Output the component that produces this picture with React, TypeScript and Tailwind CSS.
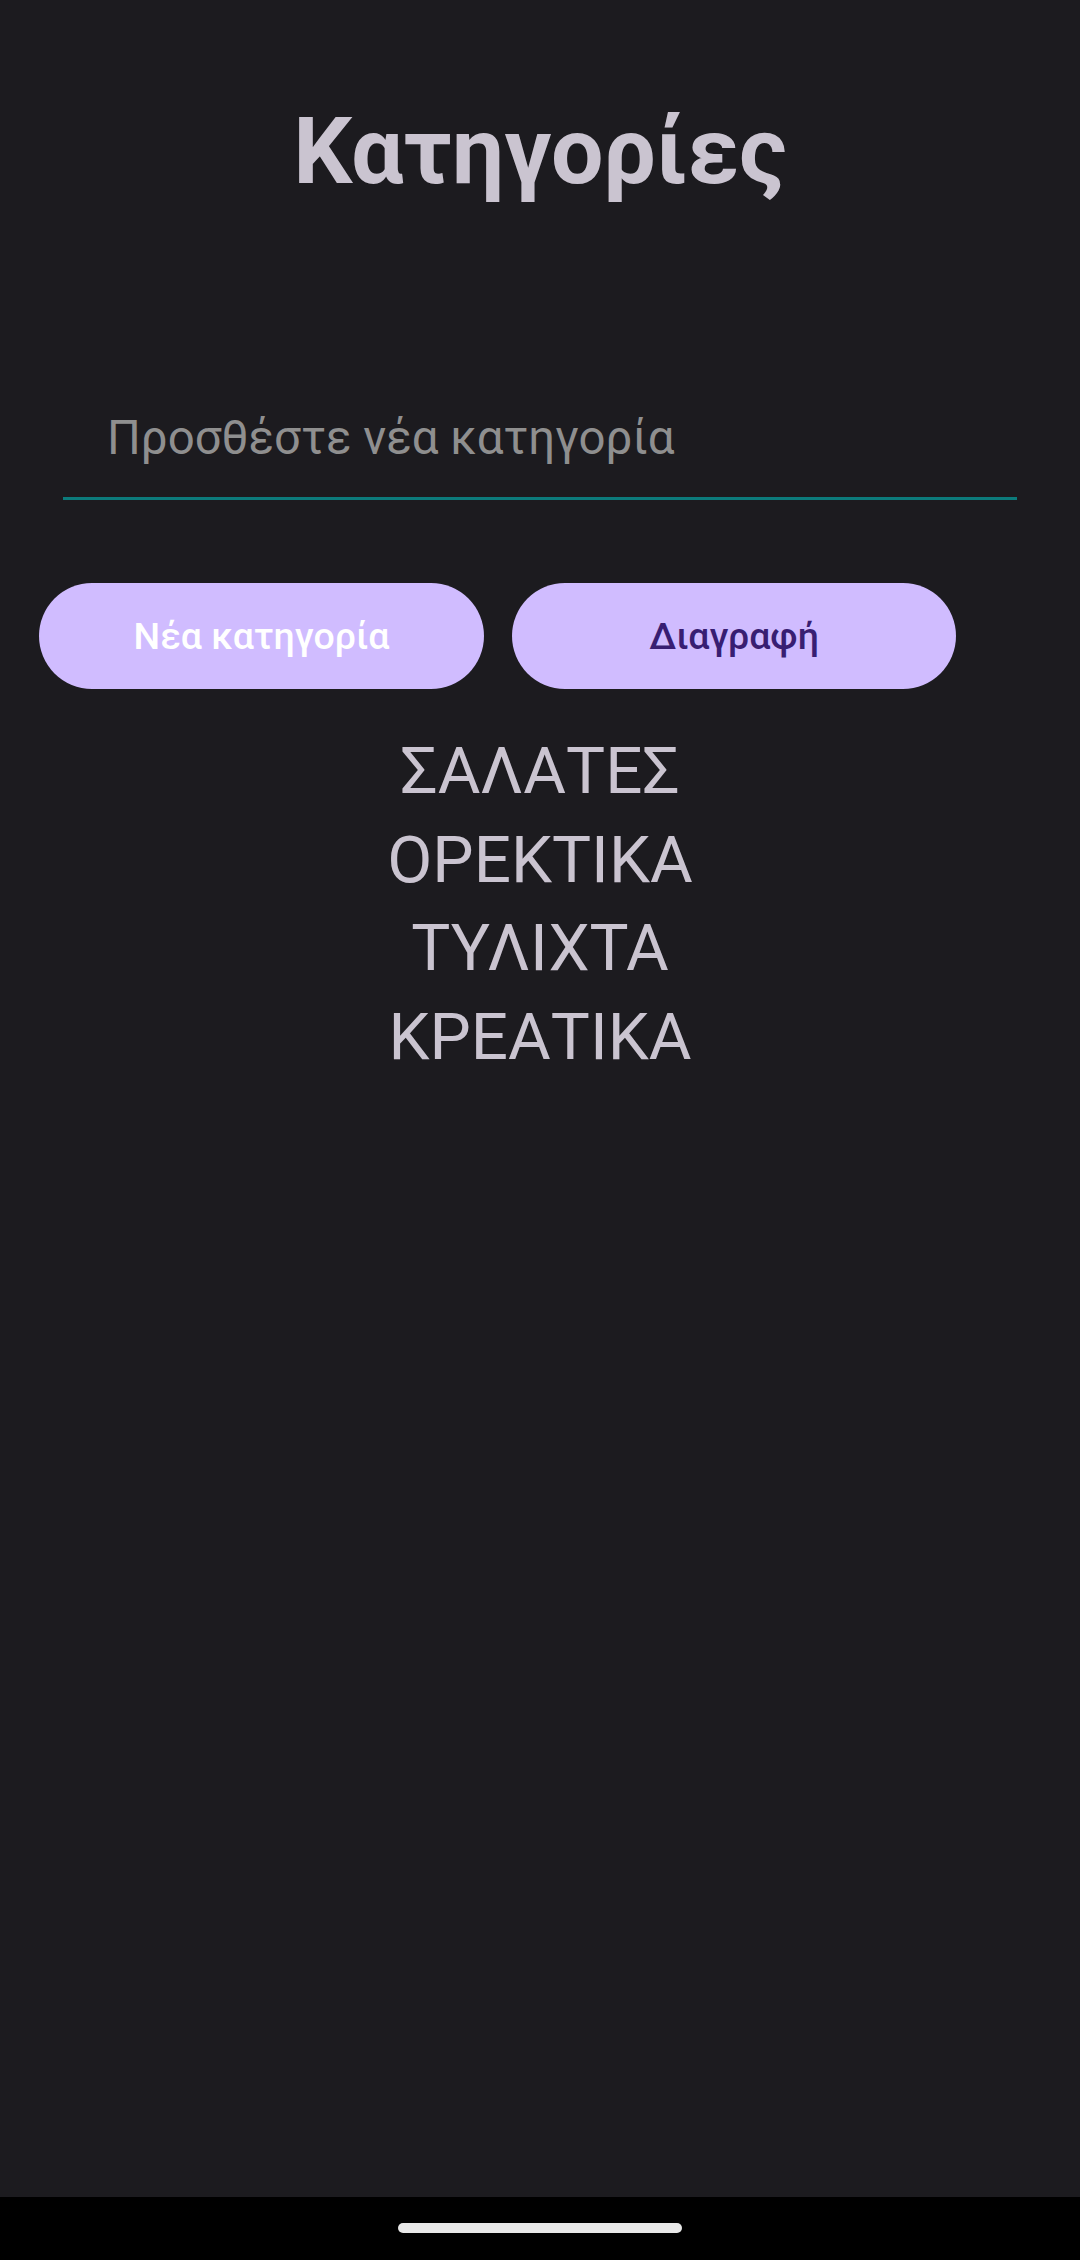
export default function App() {
  const categories = ['ΣΑΛΑΤΕΣ', 'ΟΡΕΚΤΙΚΑ', 'ΤΥΛΙΧΤΑ', 'ΚΡΕΑΤΙΚΑ'];

  return (
    <div className="w-[1080px] h-[2260px] flex flex-col bg-[#1c1b1f] font-['Roboto','Noto_Sans',sans-serif]">
      <div className="flex-1 flex flex-col">
        <h1 className="pt-[105px] text-center text-[93px] leading-[93px] font-bold text-[#cac4d0]">
          Κατηγορίες
        </h1>

        <div className="mt-[217px] mx-[63px]">
          <div className="pl-[44px] text-[47.4px] leading-[47px] text-[#8f8f8f]">
            Προσθέστε νέα κατηγορία
          </div>
          <div className="mt-[35px] h-[3px] bg-[#0c7b7b]" />
        </div>

        <div className="mt-[83px] ml-[39px] flex gap-[28px]">
          <button className="w-[445px] h-[106px] rounded-full bg-[#d0bcff] text-[37.5px] font-medium text-white">
            Νέα κατηγορία
          </button>
          <button className="w-[444px] h-[106px] rounded-full bg-[#d0bcff] text-[37.5px] font-medium text-[#381e72]">
            Διαγραφή
          </button>
        </div>

        <ul className="mt-[38px] flex flex-col items-center">
          {categories.map((c) => (
            <li key={c} className="text-[65.5px] leading-[88.5px] text-[#cac4d0]">
              {c}
            </li>
          ))}
        </ul>
      </div>

      <div className="h-[63px] bg-black flex justify-center pt-[26px]">
        <div className="w-[284px] h-[10px] rounded-full bg-[#e8e8e8]" />
      </div>
    </div>
  );
}
